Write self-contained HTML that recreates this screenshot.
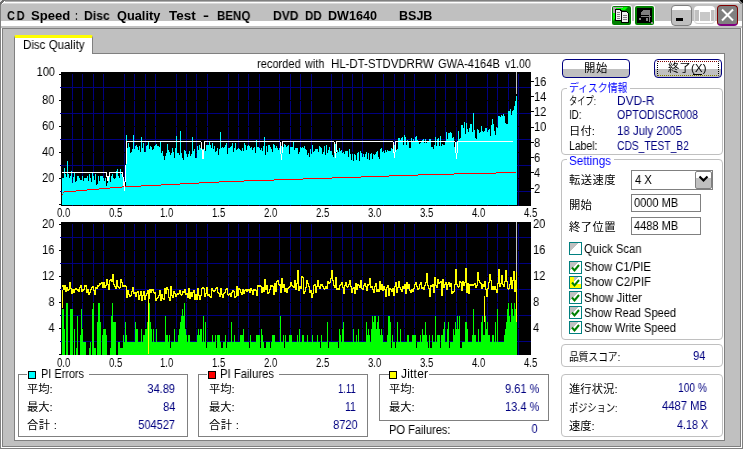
<!DOCTYPE html><html><head><meta charset="utf-8"><title>CD Speed : Disc Quality Test</title><style>
html,body{margin:0;padding:0}
body{width:743px;height:449px;overflow:hidden;background:#c0c0c0;position:relative;font-family:'Liberation Sans','Noto Sans CJK JP',sans-serif;font-size:12px;line-height:14px}
.a{position:absolute;box-sizing:border-box}
.t{will-change:transform;position:absolute;white-space:pre;line-height:14px;height:14px;transform-origin:0 0}
.ch{position:absolute;left:0;top:0}
.gb{position:absolute;box-sizing:border-box;border:1px solid #808080}
.rg{position:absolute;box-sizing:border-box;border:1px solid #c0c0c0;border-radius:4px}
.lab{position:absolute;background:#fff;height:3px}
.btn{position:absolute;box-sizing:border-box;border:1px solid #000080;border-radius:4px;background:linear-gradient(#fff 0,#fff 52%,#c0c0c0 52%,#c0c0c0 100%)}
.inp{position:absolute;box-sizing:border-box;border:1px solid #808080;background:#fff}
.cb{position:absolute;box-sizing:border-box;width:13px;height:13px;border:1px solid #008080;background:linear-gradient(135deg,#c0c0c0 0,#c0c0c0 38%,#fff 38%)}
.sq{position:absolute;box-sizing:border-box;width:8px;height:8px;border:1px solid #000}
</style></head><body>
<div class="a" style="left:0;top:0;width:743px;height:449px;border:1px solid #808080"></div>
<div class="a" style="left:1px;top:1px;width:741px;height:447px;border:1px solid #fff;border-top-color:#b0b0b0"></div>
<div class="a" style="left:2px;top:2px;width:739px;height:445px;border:1px solid #808080;border-top-color:#fff"></div>
<div class="a" style="left:3px;top:3px;width:737px;height:1px;background:#d8d8d8"></div>
<div class="a" style="left:0;top:0;width:5px;height:5px;background:linear-gradient(135deg,#e8e8e8 0,#e8e8e8 28%,#707070 28%,#707070 52%,#fff 52%,#fff 68%,transparent 68%)"></div>
<div class="a" style="left:738px;top:0;width:5px;height:5px;background:linear-gradient(225deg,#000 0,#000 35%,#808080 35%,#808080 60%,transparent 60%)"></div>
<div class="a" style="left:1px;top:4px;width:2px;height:24px;background:#c0c0c0"></div>
<div class="a" style="left:740px;top:4px;width:2px;height:24px;background:#c0c0c0"></div>
<div class="a" style="left:1px;top:21px;width:741px;height:5px;background:#fff"></div>
<div class="a" style="left:3px;top:28px;width:737px;height:1px;background:#808080"></div>
<svg class="a" style="left:611px;top:5px" width="45" height="21" viewBox="-1 -1 45 21" shape-rendering="crispEdges"><rect x="-1" y="-1" width="21" height="21" rx="3" fill="#fff" shape-rendering="auto"/><rect x="0" y="0" width="19" height="19" rx="2" fill="#008000" shape-rendering="auto"/><path d="M1 1h15l-3 3h-3l-9 11z" fill="#0f0" shape-rendering="auto"/><path d="M1 1h10v1H4v2H3v3H1z" fill="#a8a8a8"/><rect x="4" y="4" width="5" height="10" fill="#f0f0f0"/><path d="M3.500 3.500h5v1h1v9.500h-6z" fill="none" stroke="#000"/><rect x="10" y="6" width="6" height="10" fill="#f0f0f0"/><path d="M9.500 5.500h5l2 2v8.500h-7z" fill="#f0f0f0" stroke="#000"/><path d="M5 6.500h3M5 8.500h3M5 10.500h3M5 12.500h3M11 9.500h4M11 11.500h4M11 13.500h4" stroke="#808080"/><rect x="22" y="-1" width="21" height="21" rx="3" fill="#fff" shape-rendering="auto"/><rect x="23" y="0" width="19" height="19" rx="2" fill="#008000" shape-rendering="auto"/><rect x="25" y="2" width="15" height="15" fill="#000"/><path d="M29 9V6l2-2h6v5z" fill="#808080"/><path d="M29 10.500h10M37.500 4v12" stroke="#808080"/><rect x="27" y="12" width="2" height="2" fill="#808080"/><rect x="34" y="12" width="2" height="3" fill="#808080"/><rect x="39" y="16" width="2" height="2" fill="#909090"/></svg>
<div class="a" style="left:671px;top:5px;width:21px;height:21px;border:1px solid #808080;border-radius:4px;background:linear-gradient(#fff 0,#fff 22%,#c0c0c0 22%)"></div>
<div class="a" style="left:676px;top:18px;width:7px;height:3px;background:#000"></div>
<div class="a" style="left:694px;top:6px;width:21px;height:4px;background:#fff;border-radius:4px 4px 0 0"></div>
<div class="a" style="left:694px;top:10px;width:21px;height:14px;border-left:1px solid #dcdcdc;border-right:1px solid #dcdcdc;border-bottom:1px solid #d0d0d0;border-radius:0 0 4px 4px"></div>
<div class="a" style="left:699px;top:10px;width:12px;height:12px;border:1px solid #fff;border-top-width:2px;background:#c8c8c8"></div>
<div class="a" style="left:717px;top:5px;width:21px;height:21px;border:1px solid #800000;border-bottom:2px solid #800080;border-radius:4px;background:#808080"></div>
<svg class="a" style="left:717px;top:5px" width="21" height="21"><path d="M5 4.500L16 15.500M16 4.500L5 15.500" stroke="#fff" stroke-width="2" fill="none"/></svg>
<div class="a" style="left:14px;top:53px;width:711px;height:388px;background:#fff;border:1px solid #808080"></div>
<div class="a" style="left:14px;top:35px;width:79px;height:19px;background:#fff;border-left:1px solid #808080;border-right:1px solid #808080;border-top:3px solid #ff0;border-radius:2px 2px 0 0"></div>
<div class="btn" style="left:562px;top:59px;width:68px;height:19px"></div>
<div class="btn" style="left:654px;top:59px;width:68px;height:19px"></div>
<div class="a" style="left:657px;top:61px;width:62px;height:15px;border:1px dotted #000;border-top-color:#800000;border-bottom-color:#808000"></div>
<div class="a" style="left:693px;top:74px;width:9px;height:1px;background:#000"></div>
<div class="rg" style="left:561px;top:88px;width:162px;height:67px"></div>
<div class="lab" style="left:567px;top:87px;width:63px"></div>
<div class="rg" style="left:561px;top:159px;width:162px;height:181px"></div>
<div class="lab" style="left:567px;top:158px;width:47px"></div>
<div class="rg" style="left:561px;top:344px;width:162px;height:23px"></div>
<div class="rg" style="left:561px;top:374px;width:162px;height:63px"></div>
<div class="inp" style="left:631px;top:170px;width:82px;height:20px"></div>
<div class="a" style="left:695px;top:171px;width:17px;height:18px;border:1px solid #808080;border-radius:2px;background:linear-gradient(#fff 0,#fff 36%,#c0c0c0 36%)"></div>
<svg class="a" style="left:695px;top:171px" width="17" height="18"><path d="M4.500 5.500l4 4 4-4" stroke="#000" stroke-width="2.200" fill="none"/></svg>
<div class="inp" style="left:631px;top:194px;width:70px;height:18px"></div>
<div class="inp" style="left:631px;top:217px;width:70px;height:18px"></div>
<div class="cb" style="left:569px;top:242px;"></div>
<div class="cb" style="left:569px;top:261px;"></div>
<svg class="a" style="left:569px;top:261px" width="13" height="13"><path d="M3 6.500l2.500 3 4.500-5.500" stroke="#008000" stroke-width="2" fill="none"/></svg>
<div class="cb" style="left:569px;top:276px;background:linear-gradient(135deg,#c0c0c0 0,#c0c0c0 38%,transparent 38%),linear-gradient(#fff 0,#fff 70%,#ff0 70%),#fff;box-shadow:inset 4px -4px 0 #ff0;"></div>
<svg class="a" style="left:569px;top:276px" width="13" height="13"><path d="M3 6.500l2.500 3 4.500-5.500" stroke="#008000" stroke-width="2" fill="none"/></svg>
<div class="cb" style="left:569px;top:291px;"></div>
<svg class="a" style="left:569px;top:291px" width="13" height="13"><path d="M3 6.500l2.500 3 4.500-5.500" stroke="#008000" stroke-width="2" fill="none"/></svg>
<div class="cb" style="left:569px;top:306px;"></div>
<svg class="a" style="left:569px;top:306px" width="13" height="13"><path d="M3 6.500l2.500 3 4.500-5.500" stroke="#008000" stroke-width="2" fill="none"/></svg>
<div class="cb" style="left:569px;top:321px;"></div>
<svg class="a" style="left:569px;top:321px" width="13" height="13"><path d="M3 6.500l2.500 3 4.500-5.500" stroke="#008000" stroke-width="2" fill="none"/></svg>
<div class="gb" style="left:18px;top:374px;width:170px;height:63px"></div>
<div class="lab" style="left:27px;top:373px;width:62px"></div>
<div class="gb" style="left:198px;top:374px;width:170px;height:63px"></div>
<div class="lab" style="left:207px;top:373px;width:72px"></div>
<div class="gb" style="left:379px;top:374px;width:170px;height:47px"></div>
<div class="lab" style="left:389px;top:373px;width:40px"></div>
<div class="sq" style="left:28px;top:371px;background:#0ff"></div>
<div class="sq" style="left:208px;top:371px;background:#f00"></div>
<div class="sq" style="left:389px;top:371px;background:#ff0"></div>
<svg class="ch" width="743" height="449" viewBox="0 0 743 449" shape-rendering="crispEdges">
<rect x="61" y="72" width="470" height="134" fill="#000"/>
<rect x="61" y="222" width="470" height="133" fill="#000"/>
<path d="M59 74.5h2M59 100.5h2M59 126.5h2M59 152.5h2M59 178.5h2M59 204.5h2M59 224.5h2M59 250.5h2M59 276.5h2M59 302.5h2M59 328.5h2M59 354.5h2" stroke="#000" stroke-width="1" fill="none"/>
<path d="M531 81.5h3M531 96.5h3M531 111.5h3M531 127.5h3M531 142.5h3M531 157.5h3M531 172.5h3M531 188.5h3" stroke="#000" stroke-width="1" fill="none"/>
<path d="M60 191.5H531M60 165.5H531M60 139.5H531M60 113.5H531M60 87.5H531M72.5 74V206M82.5 74V206M93.5 74V206M103.5 74V206M124.5 74V206M134.5 74V206M145.5 74V206M155.5 74V206M176.5 74V206M186.5 74V206M196.5 74V206M207.5 74V206M228.5 74V206M238.5 74V206M248.5 74V206M259.5 74V206M279.5 74V206M290.5 74V206M300.5 74V206M311.5 74V206M331.5 74V206M342.5 74V206M352.5 74V206M362.5 74V206M383.5 74V206M394.5 74V206M404.5 74V206M414.5 74V206M435.5 74V206M445.5 74V206M456.5 74V206M466.5 74V206M487.5 74V206M497.5 74V206M508.5 74V206M518.5 74V206" stroke="#000080" stroke-width="1" fill="none"/>
<path d="M60 341.5H531M60 315.5H531M60 289.5H531M60 263.5H531M60 237.5H531M72.5 224V355M82.5 224V355M93.5 224V355M103.5 224V355M124.5 224V355M134.5 224V355M145.5 224V355M155.5 224V355M176.5 224V355M186.5 224V355M196.5 224V355M207.5 224V355M228.5 224V355M238.5 224V355M248.5 224V355M259.5 224V355M279.5 224V355M290.5 224V355M300.5 224V355M311.5 224V355M331.5 224V355M342.5 224V355M352.5 224V355M362.5 224V355M383.5 224V355M394.5 224V355M404.5 224V355M414.5 224V355M435.5 224V355M445.5 224V355M456.5 224V355M466.5 224V355M487.5 224V355M497.5 224V355M508.5 224V355M518.5 224V355" stroke="#000080" stroke-width="1" fill="none"/>
<path d="M62 100.5H531M62 126.5H531M62 152.5H531M62 178.5H531M62 250.5H531M62 276.5H531M62 302.5H531M62 328.5H531" stroke="#000" stroke-width="1" fill="none"/>
<path d="M62 205V178h1V178h1V168h1V174h1V177h1V161h1V174h1V178h1V176h1V171h1V183h1V177h1V172h1V182h1V181h1V176h1V176h1V178h1V180h1V180h1V176h1V181h1V178h1V178h1V178h1V176h1V181h1V174h1V178h1V182h1V173h1V176h1V180h1V174h1V185h1V184h1V176h1V181h1V176h1V176h1V176h1V178h1V181h1V178h1V186h1V183h1V178h1V176h1V182h1V176h1V174h1V178h1V179h1V178h1V171h1V169h1V176h1V178h1V169h1V174h1V174h1V179h1V181h1V186h1V135h1V148h1V143h1V147h1V153h1V152h1V149h1V135h1V149h1V146h1V145h1V147h1V150h1V146h1V152h1V137h1V148h1V143h1V152h1V152h1V146h1V145h1V142h1V149h1V146h1V147h1V150h1V149h1V146h1V145h1V144h1V146h1V146h1V147h1V142h1V153h1V151h1V156h1V160h1V156h1V153h1V144h1V150h1V152h1V155h1V153h1V148h1V152h1V158h1V148h1V136h1V153h1V153h1V155h1V131h1V153h1V158h1V160h1V150h1V151h1V154h1V157h1V154h1V151h1V156h1V154h1V137h1V151h1V149h1V158h1V158h1V146h1V150h1V145h1V148h1V148h1V149h1V149h1V143h1V151h1V145h1V145h1V145h1V142h1V145h1V148h1V143h1V149h1V146h1V152h1V151h1V148h1V155h1V149h1V132h1V148h1V147h1V148h1V147h1V145h1V143h1V154h1V148h1V148h1V147h1V146h1V143h1V152h1V148h1V143h1V150h1V149h1V148h1V149h1V150h1V151h1V148h1V151h1V143h1V145h1V150h1V146h1V145h1V146h1V148h1V147h1V150h1V148h1V147h1V153h1V140h1V147h1V147h1V148h1V150h1V148h1V151h1V146h1V137h1V155h1V146h1V152h1V145h1V145h1V147h1V149h1V152h1V144h1V145h1V148h1V146h1V148h1V150h1V148h1V149h1V146h1V147h1V147h1V144h1V145h1V147h1V146h1V145h1V154h1V147h1V147h1V147h1V142h1V150h1V148h1V148h1V148h1V154h1V152h1V147h1V148h1V147h1V148h1V146h1V149h1V150h1V155h1V153h1V157h1V149h1V154h1V145h1V152h1V151h1V149h1V149h1V149h1V152h1V146h1V147h1V148h1V154h1V152h1V146h1V155h1V145h1V153h1V150h1V147h1V151h1V151h1V155h1V157h1V152h1V144h1V153h1V150h1V152h1V148h1V151h1V150h1V153h1V152h1V154h1V151h1V151h1V151h1V157h1V149h1V154h1V160h1V154h1V161h1V154h1V155h1V160h1V153h1V152h1V161h1V151h1V153h1V157h1V154h1V157h1V154h1V152h1V159h1V153h1V160h1V154h1V153h1V159h1V154h1V155h1V154h1V152h1V151h1V157h1V159h1V149h1V148h1V152h1V151h1V153h1V150h1V152h1V150h1V151h1V151h1V151h1V148h1V149h1V150h1V145h1V150h1V150h1V149h1V138h1V138h1V140h1V138h1V137h1V145h1V135h1V137h1V145h1V140h1V141h1V148h1V148h1V138h1V141h1V139h1V141h1V137h1V136h1V140h1V142h1V144h1V143h1V142h1V140h1V139h1V143h1V139h1V143h1V142h1V141h1V139h1V139h1V147h1V147h1V149h1V145h1V137h1V146h1V139h1V138h1V146h1V136h1V146h1V144h1V145h1V145h1V141h1V132h1V139h1V133h1V133h1V132h1V133h1V138h1V137h1V147h1V147h1V142h1V141h1V131h1V139h1V138h1V125h1V125h1V128h1V122h1V134h1V123h1V129h1V132h1V128h1V124h1V124h1V132h1V113h1V130h1V138h1V139h1V129h1V130h1V133h1V132h1V126h1V131h1V132h1V131h1V128h1V128h1V132h1V130h1V129h1V136h1V125h1V119h1V124h1V131h1V135h1V127h1V128h1V116h1V116h1V117h1V115h1V116h1V114h1V116h1V123h1V124h1V124h1V111h1V111h1V109h1V115h1V111h1V110h1V106h1V101h1V96h1V205Z" fill="#0ff"/>
<path d="M62 194h1v1h-1zM63 192h1v1h-1zM64 191h12v1h-12zM76 190h11v1h-11zM87 189h12v1h-12zM99 188h11v1h-11zM110 187h12v1h-12zM122 186h19v1h-19zM141 185h20v1h-20zM161 184h19v1h-19zM180 183h19v1h-19zM199 182h20v1h-20zM219 181h25v1h-25zM244 180h30v1h-30zM274 179h29v1h-29zM303 178h29v1h-29zM332 177h29v1h-29zM361 176h28v1h-28zM389 175h29v1h-29zM418 174h36v1h-36zM454 173h42v1h-42zM496 172h20v1h-20z" fill="#f00"/>
<path d="M62 172L106 172L108 181L110 172L122.5 172L124.5 191L126 165L126.5 141.5L201 141.5L203 159L205 141.5L280 141.5L281.5 160L283 141.5L334 141.5L335.5 158L337 141.5L393 141.5L394.5 158L396 141.5L455 141.5L456.5 159L458 141.5L513 141.5" stroke="#fff" stroke-width="1" fill="none"/>
<rect x="516" y="72" width="1" height="22" fill="#c0c0c0"/>
<path d="M62 355V309h1V309h1V329h1V355h1V303h1V303h1V355h1V355h1V309h1V309h1V309h1V355h1V329h1V355h1V348h1V316h1V355h1V355h1V335h1V309h1V329h1V342h1V342h1V342h1V355h1V355h1V355h1V348h1V342h1V355h1V309h1V303h1V348h1V348h1V355h1V322h1V303h1V303h1V322h1V355h1V335h1V329h1V329h1V329h1V335h1V355h1V355h1V355h1V348h1V316h1V303h1V322h1V322h1V322h1V355h1V355h1V342h1V342h1V348h1V348h1V348h1V335h1V342h1V322h1V335h1V342h1V342h1V342h1V342h1V342h1V342h1V342h1V342h1V322h1V329h1V329h1V342h1V342h1V342h1V329h1V342h1V335h1V335h1V329h1V329h1V322h1V309h1V303h1V322h1V329h1V342h1V329h1V342h1V342h1V329h1V342h1V342h1V342h1V342h1V342h1V342h1V342h1V342h1V316h1V335h1V335h1V342h1V335h1V348h1V342h1V342h1V342h1V329h1V342h1V342h1V342h1V335h1V329h1V322h1V316h1V309h1V316h1V303h1V329h1V335h1V342h1V335h1V335h1V342h1V342h1V342h1V342h1V342h1V342h1V342h1V335h1V329h1V335h1V329h1V329h1V342h1V316h1V342h1V322h1V348h1V342h1V342h1V342h1V342h1V342h1V335h1V342h1V342h1V335h1V348h1V335h1V335h1V335h1V342h1V348h1V348h1V342h1V342h1V335h1V348h1V342h1V342h1V342h1V342h1V322h1V342h1V342h1V335h1V342h1V342h1V342h1V342h1V342h1V335h1V335h1V335h1V329h1V342h1V342h1V342h1V342h1V342h1V348h1V335h1V342h1V342h1V342h1V342h1V342h1V335h1V335h1V335h1V335h1V348h1V329h1V335h1V342h1V348h1V348h1V342h1V342h1V342h1V342h1V348h1V342h1V335h1V335h1V335h1V342h1V342h1V342h1V342h1V342h1V316h1V342h1V342h1V335h1V348h1V335h1V342h1V342h1V342h1V335h1V335h1V335h1V342h1V342h1V342h1V342h1V342h1V335h1V342h1V329h1V342h1V342h1V335h1V335h1V342h1V342h1V342h1V335h1V342h1V342h1V342h1V342h1V335h1V342h1V342h1V342h1V342h1V335h1V342h1V342h1V348h1V335h1V342h1V342h1V342h1V342h1V342h1V322h1V348h1V342h1V342h1V342h1V342h1V342h1V342h1V342h1V342h1V342h1V348h1V329h1V335h1V342h1V329h1V322h1V342h1V342h1V342h1V342h1V342h1V342h1V342h1V342h1V342h1V329h1V342h1V342h1V335h1V342h1V329h1V342h1V342h1V342h1V342h1V342h1V342h1V342h1V322h1V335h1V329h1V335h1V342h1V329h1V316h1V322h1V316h1V316h1V329h1V322h1V316h1V329h1V335h1V329h1V335h1V342h1V342h1V342h1V342h1V335h1V316h1V316h1V322h1V348h1V335h1V342h1V342h1V348h1V342h1V322h1V342h1V342h1V329h1V342h1V342h1V342h1V342h1V342h1V342h1V335h1V335h1V342h1V342h1V342h1V335h1V335h1V335h1V335h1V348h1V342h1V342h1V342h1V335h1V342h1V329h1V335h1V335h1V322h1V335h1V342h1V348h1V335h1V348h1V348h1V335h1V342h1V342h1V316h1V342h1V335h1V335h1V335h1V348h1V335h1V335h1V329h1V322h1V342h1V342h1V329h1V322h1V348h1V342h1V342h1V342h1V329h1V335h1V322h1V329h1V316h1V329h1V316h1V348h1V348h1V342h1V342h1V342h1V322h1V322h1V329h1V342h1V342h1V342h1V342h1V335h1V309h1V335h1V335h1V342h1V342h1V329h1V342h1V342h1V322h1V316h1V335h1V335h1V316h1V329h1V322h1V335h1V335h1V342h1V342h1V335h1V335h1V342h1V322h1V342h1V309h1V342h1V342h1V342h1V342h1V342h1V342h1V335h1V329h1V322h1V309h1V303h1V316h1V322h1V303h1V309h1V316h1V303h1V309h1V316h1V355Z" fill="#0f0"/>
<path d="M62.5 290V308M148.5 295V354M484.5 296V322M516.5 272V322" stroke="#ff0" stroke-width="1.4" fill="none"/>
<rect x="516" y="222" width="1" height="50" fill="#c0c0c0"/>
<path d="M62 285h1v2h-1zM63 285h1v5h-1zM64 285h1v5h-1zM65 285h1v7h-1zM66 287h1v5h-1zM67 287h1v4h-1zM68 289h1v2h-1zM69 282h1v8h-1zM70 282h1v7h-1zM71 288h1v6h-1zM72 289h1v5h-1zM73 289h1v4h-1zM74 289h1v4h-1zM75 288h1v2h-1zM76 288h1v2h-1zM77 289h1v2h-1zM78 289h1v3h-1zM79 287h1v5h-1zM80 285h1v3h-1zM81 285h1v7h-1zM82 289h1v3h-1zM83 289h1v2h-1zM84 285h1v5h-1zM85 285h1v2h-1zM86 285h1v8h-1zM87 289h1v4h-1zM88 289h1v6h-1zM89 292h1v3h-1zM90 289h1v4h-1zM91 287h1v3h-1zM92 286h1v2h-1zM93 286h1v5h-1zM94 290h1v5h-1zM95 287h1v8h-1zM96 287h1v2h-1zM97 285h1v4h-1zM98 285h1v2h-1zM99 283h1v3h-1zM100 283h1v2h-1zM101 282h1v2h-1zM102 282h1v6h-1zM103 282h1v6h-1zM104 282h1v6h-1zM105 285h1v3h-1zM106 279h1v7h-1zM107 279h1v6h-1zM108 284h1v6h-1zM109 280h1v10h-1zM110 279h1v2h-1zM111 279h1v3h-1zM112 274h1v8h-1zM113 274h1v11h-1zM114 284h1v3h-1zM115 286h1v3h-1zM116 280h1v9h-1zM117 280h1v7h-1zM118 286h1v2h-1zM119 287h1v2h-1zM120 279h1v9h-1zM121 279h1v4h-1zM122 282h1v5h-1zM123 285h1v2h-1zM124 285h1v2h-1zM125 285h1v2h-1zM126 286h1v12h-1zM127 290h1v8h-1zM128 290h1v5h-1zM129 294h1v3h-1zM130 295h1v2h-1zM131 291h1v5h-1zM132 287h1v5h-1zM133 287h1v7h-1zM134 292h1v2h-1zM135 292h1v5h-1zM136 292h1v5h-1zM137 291h1v2h-1zM138 291h1v9h-1zM139 295h1v5h-1zM140 291h1v5h-1zM141 291h1v10h-1zM142 295h1v6h-1zM143 291h1v5h-1zM144 291h1v9h-1zM145 295h1v5h-1zM146 293h1v3h-1zM147 290h1v4h-1zM148 290h1v9h-1zM149 289h1v10h-1zM150 289h1v4h-1zM151 289h1v4h-1zM152 289h1v2h-1zM153 289h1v4h-1zM154 292h1v2h-1zM155 292h1v9h-1zM156 298h1v3h-1zM157 297h1v2h-1zM158 295h1v3h-1zM159 290h1v6h-1zM160 290h1v11h-1zM161 294h1v7h-1zM162 294h1v5h-1zM163 298h1v2h-1zM164 288h1v12h-1zM165 288h1v6h-1zM166 287h1v7h-1zM167 287h1v3h-1zM168 289h1v9h-1zM169 297h1v4h-1zM170 286h1v15h-1zM171 286h1v10h-1zM172 295h1v3h-1zM173 291h1v7h-1zM174 291h1v3h-1zM175 293h1v4h-1zM176 294h1v3h-1zM177 293h1v2h-1zM178 293h1v2h-1zM179 290h1v4h-1zM180 290h1v5h-1zM181 294h1v2h-1zM182 291h1v4h-1zM183 291h1v2h-1zM184 289h1v4h-1zM185 289h1v6h-1zM186 293h1v2h-1zM187 293h1v5h-1zM188 288h1v10h-1zM189 288h1v11h-1zM190 292h1v7h-1zM191 292h1v5h-1zM192 292h1v5h-1zM193 290h1v3h-1zM194 290h1v10h-1zM195 294h1v6h-1zM196 294h1v6h-1zM197 288h1v12h-1zM198 288h1v8h-1zM199 295h1v5h-1zM200 295h1v5h-1zM201 288h1v8h-1zM202 287h1v2h-1zM203 287h1v2h-1zM204 288h1v9h-1zM205 293h1v4h-1zM206 287h1v7h-1zM207 287h1v9h-1zM208 294h1v2h-1zM209 294h1v3h-1zM210 296h1v2h-1zM211 288h1v10h-1zM212 288h1v3h-1zM213 290h1v2h-1zM214 290h1v2h-1zM215 288h1v3h-1zM216 287h1v2h-1zM217 287h1v6h-1zM218 292h1v2h-1zM219 293h1v4h-1zM220 288h1v9h-1zM221 288h1v7h-1zM222 294h1v4h-1zM223 293h1v5h-1zM224 292h1v2h-1zM225 289h1v4h-1zM226 288h1v2h-1zM227 288h1v7h-1zM228 294h1v2h-1zM229 293h1v2h-1zM230 293h1v4h-1zM231 292h1v5h-1zM232 290h1v3h-1zM233 290h1v2h-1zM234 291h1v7h-1zM235 296h1v2h-1zM236 286h1v11h-1zM237 286h1v10h-1zM238 288h1v8h-1zM239 288h1v2h-1zM240 289h1v4h-1zM241 292h1v3h-1zM242 289h1v6h-1zM243 289h1v5h-1zM244 290h1v4h-1zM245 289h1v2h-1zM246 289h1v3h-1zM247 289h1v3h-1zM248 289h1v2h-1zM249 289h1v4h-1zM250 288h1v5h-1zM251 288h1v3h-1zM252 290h1v5h-1zM253 289h1v6h-1zM254 289h1v2h-1zM255 289h1v2h-1zM256 290h1v6h-1zM257 285h1v11h-1zM258 285h1v2h-1zM259 285h1v2h-1zM260 285h1v2h-1zM261 286h1v7h-1zM262 287h1v6h-1zM263 287h1v5h-1zM264 279h1v13h-1zM265 279h1v11h-1zM266 285h1v5h-1zM267 285h1v9h-1zM268 292h1v2h-1zM269 289h1v4h-1zM270 285h1v5h-1zM271 285h1v2h-1zM272 285h1v2h-1zM273 286h1v9h-1zM274 283h1v12h-1zM275 283h1v9h-1zM276 281h1v11h-1zM277 280h1v2h-1zM278 280h1v5h-1zM279 284h1v2h-1zM280 284h1v9h-1zM281 278h1v15h-1zM282 278h1v10h-1zM283 284h1v4h-1zM284 284h1v8h-1zM285 288h1v4h-1zM286 288h1v5h-1zM287 288h1v5h-1zM288 287h1v2h-1zM289 286h1v2h-1zM290 282h1v5h-1zM291 282h1v4h-1zM292 285h1v2h-1zM293 286h1v2h-1zM294 280h1v8h-1zM295 280h1v10h-1zM296 283h1v7h-1zM297 270h1v14h-1zM298 270h1v21h-1zM299 286h1v5h-1zM300 286h1v3h-1zM301 276h1v13h-1zM302 276h1v2h-1zM303 277h1v17h-1zM304 291h1v3h-1zM305 287h1v5h-1zM306 280h1v8h-1zM307 280h1v4h-1zM308 283h1v4h-1zM309 286h1v7h-1zM310 290h1v3h-1zM311 290h1v8h-1zM312 293h1v5h-1zM313 285h1v9h-1zM314 284h1v2h-1zM315 284h1v9h-1zM316 286h1v7h-1zM317 280h1v7h-1zM318 280h1v7h-1zM319 286h1v3h-1zM320 284h1v5h-1zM321 284h1v2h-1zM322 284h1v3h-1zM323 286h1v3h-1zM324 288h1v2h-1zM325 286h1v3h-1zM326 286h1v3h-1zM327 281h1v8h-1zM328 281h1v3h-1zM329 282h1v2h-1zM330 278h1v5h-1zM331 270h1v9h-1zM332 270h1v11h-1zM333 280h1v6h-1zM334 285h1v3h-1zM335 277h1v11h-1zM336 277h1v13h-1zM337 288h1v2h-1zM338 288h1v2h-1zM339 285h1v5h-1zM340 284h1v2h-1zM341 282h1v3h-1zM342 282h1v6h-1zM343 287h1v7h-1zM344 285h1v9h-1zM345 282h1v4h-1zM346 282h1v5h-1zM347 286h1v2h-1zM348 284h1v3h-1zM349 280h1v5h-1zM350 280h1v7h-1zM351 286h1v7h-1zM352 288h1v5h-1zM353 287h1v2h-1zM354 287h1v7h-1zM355 283h1v11h-1zM356 283h1v7h-1zM357 284h1v6h-1zM358 284h1v2h-1zM359 285h1v3h-1zM360 280h1v8h-1zM361 280h1v9h-1zM362 288h1v2h-1zM363 285h1v5h-1zM364 283h1v3h-1zM365 283h1v4h-1zM366 286h1v5h-1zM367 284h1v7h-1zM368 284h1v2h-1zM369 278h1v7h-1zM370 278h1v10h-1zM371 286h1v2h-1zM372 286h1v4h-1zM373 289h1v4h-1zM374 286h1v7h-1zM375 283h1v4h-1zM376 283h1v9h-1zM377 289h1v3h-1zM378 289h1v3h-1zM379 281h1v11h-1zM380 281h1v9h-1zM381 284h1v6h-1zM382 284h1v7h-1zM383 286h1v5h-1zM384 286h1v4h-1zM385 289h1v8h-1zM386 287h1v10h-1zM387 285h1v3h-1zM388 285h1v11h-1zM389 288h1v8h-1zM390 288h1v2h-1zM391 289h1v3h-1zM392 288h1v4h-1zM393 288h1v8h-1zM394 286h1v10h-1zM395 282h1v5h-1zM396 282h1v11h-1zM397 287h1v6h-1zM398 281h1v7h-1zM399 281h1v7h-1zM400 287h1v3h-1zM401 289h1v3h-1zM402 286h1v6h-1zM403 286h1v3h-1zM404 284h1v5h-1zM405 284h1v10h-1zM406 282h1v12h-1zM407 282h1v7h-1zM408 284h1v5h-1zM409 284h1v7h-1zM410 290h1v3h-1zM411 289h1v4h-1zM412 289h1v3h-1zM413 288h1v4h-1zM414 284h1v5h-1zM415 282h1v3h-1zM416 282h1v5h-1zM417 286h1v4h-1zM418 288h1v2h-1zM419 284h1v5h-1zM420 282h1v3h-1zM421 282h1v7h-1zM422 287h1v2h-1zM423 287h1v3h-1zM424 285h1v5h-1zM425 282h1v4h-1zM426 273h1v10h-1zM427 273h1v13h-1zM428 285h1v4h-1zM429 288h1v9h-1zM430 285h1v12h-1zM431 285h1v2h-1zM432 284h1v3h-1zM433 284h1v9h-1zM434 277h1v16h-1zM435 277h1v9h-1zM436 285h1v3h-1zM437 279h1v9h-1zM438 279h1v5h-1zM439 282h1v2h-1zM440 281h1v2h-1zM441 281h1v15h-1zM442 279h1v17h-1zM443 279h1v9h-1zM444 284h1v4h-1zM445 282h1v3h-1zM446 282h1v8h-1zM447 284h1v6h-1zM448 282h1v3h-1zM449 282h1v5h-1zM450 283h1v4h-1zM451 283h1v11h-1zM452 291h1v3h-1zM453 291h1v2h-1zM454 284h1v8h-1zM455 269h1v16h-1zM456 269h1v16h-1zM457 284h1v3h-1zM458 286h1v2h-1zM459 281h1v6h-1zM460 281h1v2h-1zM461 282h1v9h-1zM462 281h1v10h-1zM463 281h1v5h-1zM464 282h1v4h-1zM465 268h1v15h-1zM466 268h1v25h-1zM467 283h1v10h-1zM468 283h1v11h-1zM469 284h1v10h-1zM470 284h1v2h-1zM471 284h1v2h-1zM472 284h1v2h-1zM473 284h1v2h-1zM474 283h1v2h-1zM475 283h1v5h-1zM476 285h1v3h-1zM477 272h1v14h-1zM478 272h1v9h-1zM479 280h1v3h-1zM480 282h1v2h-1zM481 283h1v6h-1zM482 284h1v5h-1zM483 284h1v3h-1zM484 281h1v6h-1zM485 281h1v9h-1zM486 289h1v8h-1zM487 288h1v9h-1zM488 282h1v7h-1zM489 274h1v9h-1zM490 274h1v7h-1zM491 280h1v10h-1zM492 286h1v4h-1zM493 286h1v4h-1zM494 286h1v4h-1zM495 286h1v4h-1zM496 289h1v4h-1zM497 283h1v10h-1zM498 269h1v15h-1zM499 269h1v18h-1zM500 283h1v4h-1zM501 275h1v9h-1zM502 275h1v10h-1zM503 284h1v3h-1zM504 281h1v6h-1zM505 270h1v12h-1zM506 270h1v12h-1zM507 281h1v8h-1zM508 288h1v2h-1zM509 284h1v5h-1zM510 277h1v8h-1zM511 277h1v12h-1zM512 280h1v9h-1zM513 271h1v10h-1zM514 271h1v21h-1zM515 280h1v12h-1zM516 280h1v2h-1z" fill="#ff0"/>
</svg>
<span class=t style="color:#000;font-size:12.5px;font-weight:bold;letter-spacing:2px;transform:scaleX(0.8773);left:6.9px;top:9.0px;">CD</span>
<span class=t style="color:#000;font-size:12.5px;font-weight:bold;transform:scaleX(1.0476);left:30.7px;top:9.0px;">Speed</span>
<span class=t style="color:#000;font-size:12.5px;font-weight:bold;transform:scaleX(0.7191);left:75.0px;top:9.0px;">:</span>
<span class=t style="color:#000;font-size:12.5px;font-weight:bold;transform:scaleX(0.9733);left:84.3px;top:9.0px;">Disc</span>
<span class=t style="color:#000;font-size:12.5px;font-weight:bold;transform:scaleX(1.0218);left:116.7px;top:9.0px;">Quality</span>
<span class=t style="color:#000;font-size:12.5px;font-weight:bold;transform:scaleX(1.0774);left:169.3px;top:9.0px;">Test</span>
<span class=t style="color:#000;font-size:12.5px;font-weight:bold;transform:scaleX(1.4382);left:203.0px;top:9.0px;">-</span>
<span class=t style="color:#000;font-size:12.5px;font-weight:bold;transform:scaleX(0.9218);left:216.7px;top:9.0px;">BENQ</span>
<span class=t style="color:#000;font-size:12.5px;font-weight:bold;transform:scaleX(0.9695);left:272.7px;top:9.0px;">DVD</span>
<span class=t style="color:#000;font-size:12.5px;font-weight:bold;transform:scaleX(0.9246);left:305.0px;top:9.0px;">DD</span>
<span class=t style="color:#000;font-size:12.5px;font-weight:bold;transform:scaleX(1.0074);left:327.7px;top:9.0px;">DW1640</span>
<span class=t style="color:#000;font-size:12.5px;font-weight:bold;transform:scaleX(1.0017);left:399.3px;top:9.0px;">BSJB</span>
<span class=t style="color:#000;transform:scaleX(0.9607);left:22.5px;top:37.8px;">Disc Quality</span>
<span class=t style="color:#000;transform:scaleX(0.9224);left:257.0px;top:56.8px;">recorded</span>
<span class=t style="color:#000;transform:scaleX(0.9089);left:304.6px;top:56.8px;">with</span>
<span class=t style="color:#000;transform:scaleX(0.9529);left:330.8px;top:56.8px;">HL-DT-STDVDRRW</span>
<span class=t style="color:#000;transform:scaleX(0.9235);left:438.0px;top:56.8px;">GWA-4164B</span>
<span class=t style="color:#000;transform:scaleX(0.8754);left:504.5px;top:56.8px;">v1.00</span>
<span class=t style="color:#000;transform:scaleX(0.92);transform-origin:100% 0;left:34.5px;top:65.4px;">100</span>
<span class=t style="color:#000;transform:scaleX(0.92);transform-origin:100% 0;left:41.1px;top:93.1px;">80</span>
<span class=t style="color:#000;transform:scaleX(0.92);transform-origin:100% 0;left:41.1px;top:119.1px;">60</span>
<span class=t style="color:#000;transform:scaleX(0.92);transform-origin:100% 0;left:41.1px;top:145.1px;">40</span>
<span class=t style="color:#000;transform:scaleX(0.92);transform-origin:100% 0;left:41.1px;top:171.1px;">20</span>
<span class=t style="color:#000;transform:scaleX(0.92);transform-origin:0 0;left:534.0px;top:74.6px;">16</span>
<span class=t style="color:#000;transform:scaleX(0.92);transform-origin:0 0;left:534.0px;top:89.9px;">14</span>
<span class=t style="color:#000;transform:scaleX(0.92);transform-origin:0 0;left:534.0px;top:105.2px;">12</span>
<span class=t style="color:#000;transform:scaleX(0.92);transform-origin:0 0;left:534.0px;top:120.4px;">10</span>
<span class=t style="color:#000;transform:scaleX(0.92);transform-origin:0 0;left:534.0px;top:135.7px;">8</span>
<span class=t style="color:#000;transform:scaleX(0.92);transform-origin:0 0;left:534.0px;top:151.0px;">6</span>
<span class=t style="color:#000;transform:scaleX(0.92);transform-origin:0 0;left:534.0px;top:166.3px;">4</span>
<span class=t style="color:#000;transform:scaleX(0.92);transform-origin:0 0;left:534.0px;top:181.6px;">2</span>
<span class=t style="color:#000;transform:scaleX(0.7910);left:56.6px;top:206.1px;">0.0</span>
<span class=t style="color:#000;transform:scaleX(0.7910);left:56.6px;top:356.1px;">0.0</span>
<span class=t style="color:#000;transform:scaleX(0.7910);left:108.5px;top:206.1px;">0.5</span>
<span class=t style="color:#000;transform:scaleX(0.7910);left:108.5px;top:356.1px;">0.5</span>
<span class=t style="color:#000;transform:scaleX(0.7910);left:160.4px;top:206.1px;">1.0</span>
<span class=t style="color:#000;transform:scaleX(0.7910);left:160.4px;top:356.1px;">1.0</span>
<span class=t style="color:#000;transform:scaleX(0.7910);left:212.3px;top:206.1px;">1.5</span>
<span class=t style="color:#000;transform:scaleX(0.7910);left:212.3px;top:356.1px;">1.5</span>
<span class=t style="color:#000;transform:scaleX(0.7910);left:264.2px;top:206.1px;">2.0</span>
<span class=t style="color:#000;transform:scaleX(0.7910);left:264.2px;top:356.1px;">2.0</span>
<span class=t style="color:#000;transform:scaleX(0.7910);left:316.1px;top:206.1px;">2.5</span>
<span class=t style="color:#000;transform:scaleX(0.7910);left:316.1px;top:356.1px;">2.5</span>
<span class=t style="color:#000;transform:scaleX(0.7910);left:368.0px;top:206.1px;">3.0</span>
<span class=t style="color:#000;transform:scaleX(0.7910);left:368.0px;top:356.1px;">3.0</span>
<span class=t style="color:#000;transform:scaleX(0.7910);left:419.9px;top:206.1px;">3.5</span>
<span class=t style="color:#000;transform:scaleX(0.7910);left:419.9px;top:356.1px;">3.5</span>
<span class=t style="color:#000;transform:scaleX(0.7910);left:471.8px;top:206.1px;">4.0</span>
<span class=t style="color:#000;transform:scaleX(0.7910);left:471.8px;top:356.1px;">4.0</span>
<span class=t style="color:#000;transform:scaleX(0.7910);left:523.7px;top:206.1px;">4.5</span>
<span class=t style="color:#000;transform:scaleX(0.7910);left:523.7px;top:356.1px;">4.5</span>
<span class=t style="color:#000;transform:scaleX(0.92);transform-origin:100% 0;left:41.1px;top:217.0px;">20</span>
<span class=t style="color:#000;transform:scaleX(0.92);transform-origin:0 0;left:532.5px;top:216.6px;">20</span>
<span class=t style="color:#000;transform:scaleX(0.92);transform-origin:100% 0;left:41.1px;top:243.0px;">16</span>
<span class=t style="color:#000;transform:scaleX(0.92);transform-origin:0 0;left:532.5px;top:242.6px;">16</span>
<span class=t style="color:#000;transform:scaleX(0.92);transform-origin:100% 0;left:41.1px;top:269.0px;">12</span>
<span class=t style="color:#000;transform:scaleX(0.92);transform-origin:0 0;left:532.5px;top:268.6px;">12</span>
<span class=t style="color:#000;transform:scaleX(0.92);transform-origin:100% 0;left:47.8px;top:295.0px;">8</span>
<span class=t style="color:#000;transform:scaleX(0.92);transform-origin:0 0;left:532.5px;top:294.6px;">8</span>
<span class=t style="color:#000;transform:scaleX(0.92);transform-origin:100% 0;left:47.8px;top:321.0px;">4</span>
<span class=t style="color:#000;transform:scaleX(0.92);transform-origin:0 0;left:532.5px;top:320.6px;">4</span>
<span class=t style="color:#000;transform:scaleX(0.9083);left:40.6px;top:366.8px;">PI Errors</span>
<span class=t style="color:#000;font-size:11.3px;transform:scaleX(0.9909);left:26.5px;top:382.2px;">平均:</span>
<span class=t style="color:#000080;transform:scaleX(0.92);transform-origin:100% 0;left:145.3px;top:381.8px;">34.89</span>
<span class=t style="color:#000;font-size:11.3px;transform:scaleX(0.9909);left:26.5px;top:400.1px;">最大:</span>
<span class=t style="color:#000080;transform:scaleX(0.92);transform-origin:100% 0;left:161.9px;top:399.8px;">84</span>
<span class=t style="color:#000;font-size:11.3px;letter-spacing:0.38px;left:26.5px;top:418.3px;">合計 :</span>
<span class=t style="color:#000080;transform:scaleX(0.92);transform-origin:100% 0;left:135.3px;top:418.3px;">504527</span>
<span class=t style="color:#000;transform:scaleX(0.9414);left:220.4px;top:366.8px;">PI Failures</span>
<span class=t style="color:#000;font-size:11.3px;transform:scaleX(0.9909);left:208.5px;top:382.2px;">平均:</span>
<span class=t style="color:#000080;transform:scaleX(0.7922);left:337.6px;top:381.8px;">1.11</span>
<span class=t style="color:#000;font-size:11.3px;transform:scaleX(0.9909);left:208.5px;top:400.1px;">最大:</span>
<span class=t style="color:#000080;transform:scaleX(0.8662);left:344.7px;top:399.8px;">11</span>
<span class=t style="color:#000;font-size:11.3px;letter-spacing:0.38px;left:208.5px;top:418.3px;">合計 :</span>
<span class=t style="color:#000080;transform:scaleX(0.92);transform-origin:100% 0;left:330.7px;top:417.8px;">8720</span>
<span class=t style="color:#000;letter-spacing:0.20px;left:401.3px;top:366.8px;">Jitter</span>
<span class=t style="color:#000;font-size:11.3px;transform:scaleX(0.9909);left:388.5px;top:382.2px;">平均:</span>
<span class=t style="color:#000080;transform:scaleX(0.92);transform-origin:100% 0;left:501.9px;top:381.8px;">9.61 %</span>
<span class=t style="color:#000;font-size:11.3px;transform:scaleX(0.9909);left:388.5px;top:400.1px;">最大:</span>
<span class=t style="color:#000080;transform:scaleX(0.92);transform-origin:100% 0;left:501.9px;top:399.8px;">13.4 %</span>
<span class=t style="color:#000;transform:scaleX(0.9222);left:389.3px;top:422.8px;">PO Failures:</span>
<span class=t style="color:#000080;transform:scaleX(0.92);transform-origin:100% 0;left:530.8px;top:422.3px;">0</span>
<span class=t style="color:#000;font-size:11.3px;letter-spacing:0.59px;left:583.6px;top:61.2px;">開始</span>
<span class=t style="color:#000;font-size:11.3px;letter-spacing:0.21px;left:667.5px;top:61.2px;">終了(X)</span>
<span class=t style="color:#0000ff;font-size:11.3px;transform:scaleX(0.8716);left:569.0px;top:81.2px;">ディスク情報</span>
<span class=t style="color:#000;font-size:11.3px;transform:scaleX(0.7291);left:569.0px;top:94.2px;">タイプ:</span>
<span class=t style="color:#000080;transform:scaleX(0.9868);left:617.3px;top:93.8px;">DVD-R</span>
<span class=t style="color:#000;transform:scaleX(0.8147);left:569.3px;top:108.3px;">ID:</span>
<span class=t style="color:#000080;transform:scaleX(0.8886);left:617.0px;top:108.3px;">OPTODISCR008</span>
<span class=t style="color:#000;font-size:11.3px;letter-spacing:0.13px;left:569.0px;top:124.2px;">日付:</span>
<span class=t style="color:#000080;transform:scaleX(0.9521);left:617.0px;top:123.8px;">18 July 2005</span>
<span class=t style="color:#000;transform:scaleX(0.8715);left:569.3px;top:138.8px;">Label:</span>
<span class=t style="color:#000080;transform:scaleX(0.8568);left:617.0px;top:138.8px;">CDS_TEST_B2</span>
<span class=t style="color:#0000ff;transform:scaleX(0.9686);left:569.0px;top:154.3px;">Settings</span>
<span class=t style="color:#000;font-size:11.3px;letter-spacing:0.43px;left:569.0px;top:172.7px;">転送速度</span>
<span class=t style="color:#000;transform:scaleX(0.9325);left:635.0px;top:172.8px;">4 X</span>
<span class=t style="color:#000;font-size:11.3px;letter-spacing:0.19px;left:569.0px;top:198.2px;">開始</span>
<span class=t style="color:#000;transform:scaleX(0.9202);left:633.8px;top:196.1px;">0000 MB</span>
<span class=t style="color:#000;font-size:11.3px;letter-spacing:0.43px;left:569.0px;top:220.2px;">終了位置</span>
<span class=t style="color:#000;transform:scaleX(0.9202);left:633.8px;top:219.1px;">4488 MB</span>
<span class=t style="color:#000;transform:scaleX(0.9371);left:584.3px;top:241.8px;">Quick Scan</span>
<span class=t style="color:#000;transform:scaleX(0.9387);left:584.3px;top:260.3px;">Show C1/PIE</span>
<span class=t style="color:#000;transform:scaleX(0.9476);left:584.3px;top:275.3px;">Show C2/PIF</span>
<span class=t style="color:#000;transform:scaleX(0.9771);left:584.3px;top:290.8px;">Show Jitter</span>
<span class=t style="color:#000;transform:scaleX(0.9193);left:584.3px;top:305.8px;">Show Read Speed</span>
<span class=t style="color:#000;transform:scaleX(0.9277);left:584.3px;top:320.8px;">Show Write Speed</span>
<span class=t style="color:#000;font-size:11.3px;transform:scaleX(0.8587);left:569.3px;top:349.7px;">品質スコア:</span>
<span class=t style="color:#000080;transform:scaleX(0.92);transform-origin:100% 0;left:692.2px;top:349.1px;">94</span>
<span class=t style="color:#000;font-size:11.3px;letter-spacing:0.07px;left:569.4px;top:382.2px;">進行状況:</span>
<span class=t style="color:#000080;transform:scaleX(0.8551);left:677.7px;top:381.3px;">100 %</span>
<span class=t style="color:#000;font-size:11.3px;transform:scaleX(0.8151);left:569.4px;top:401.2px;">ポジション:</span>
<span class=t style="color:#000080;transform:scaleX(0.9369);left:661.8px;top:399.3px;">4487 MB</span>
<span class=t style="color:#000;font-size:11.3px;transform:scaleX(0.9909);left:569.4px;top:419.2px;">速度:</span>
<span class=t style="color:#000080;transform:scaleX(0.8933);left:677.0px;top:417.6px;">4.18 X</span>
</body></html>
